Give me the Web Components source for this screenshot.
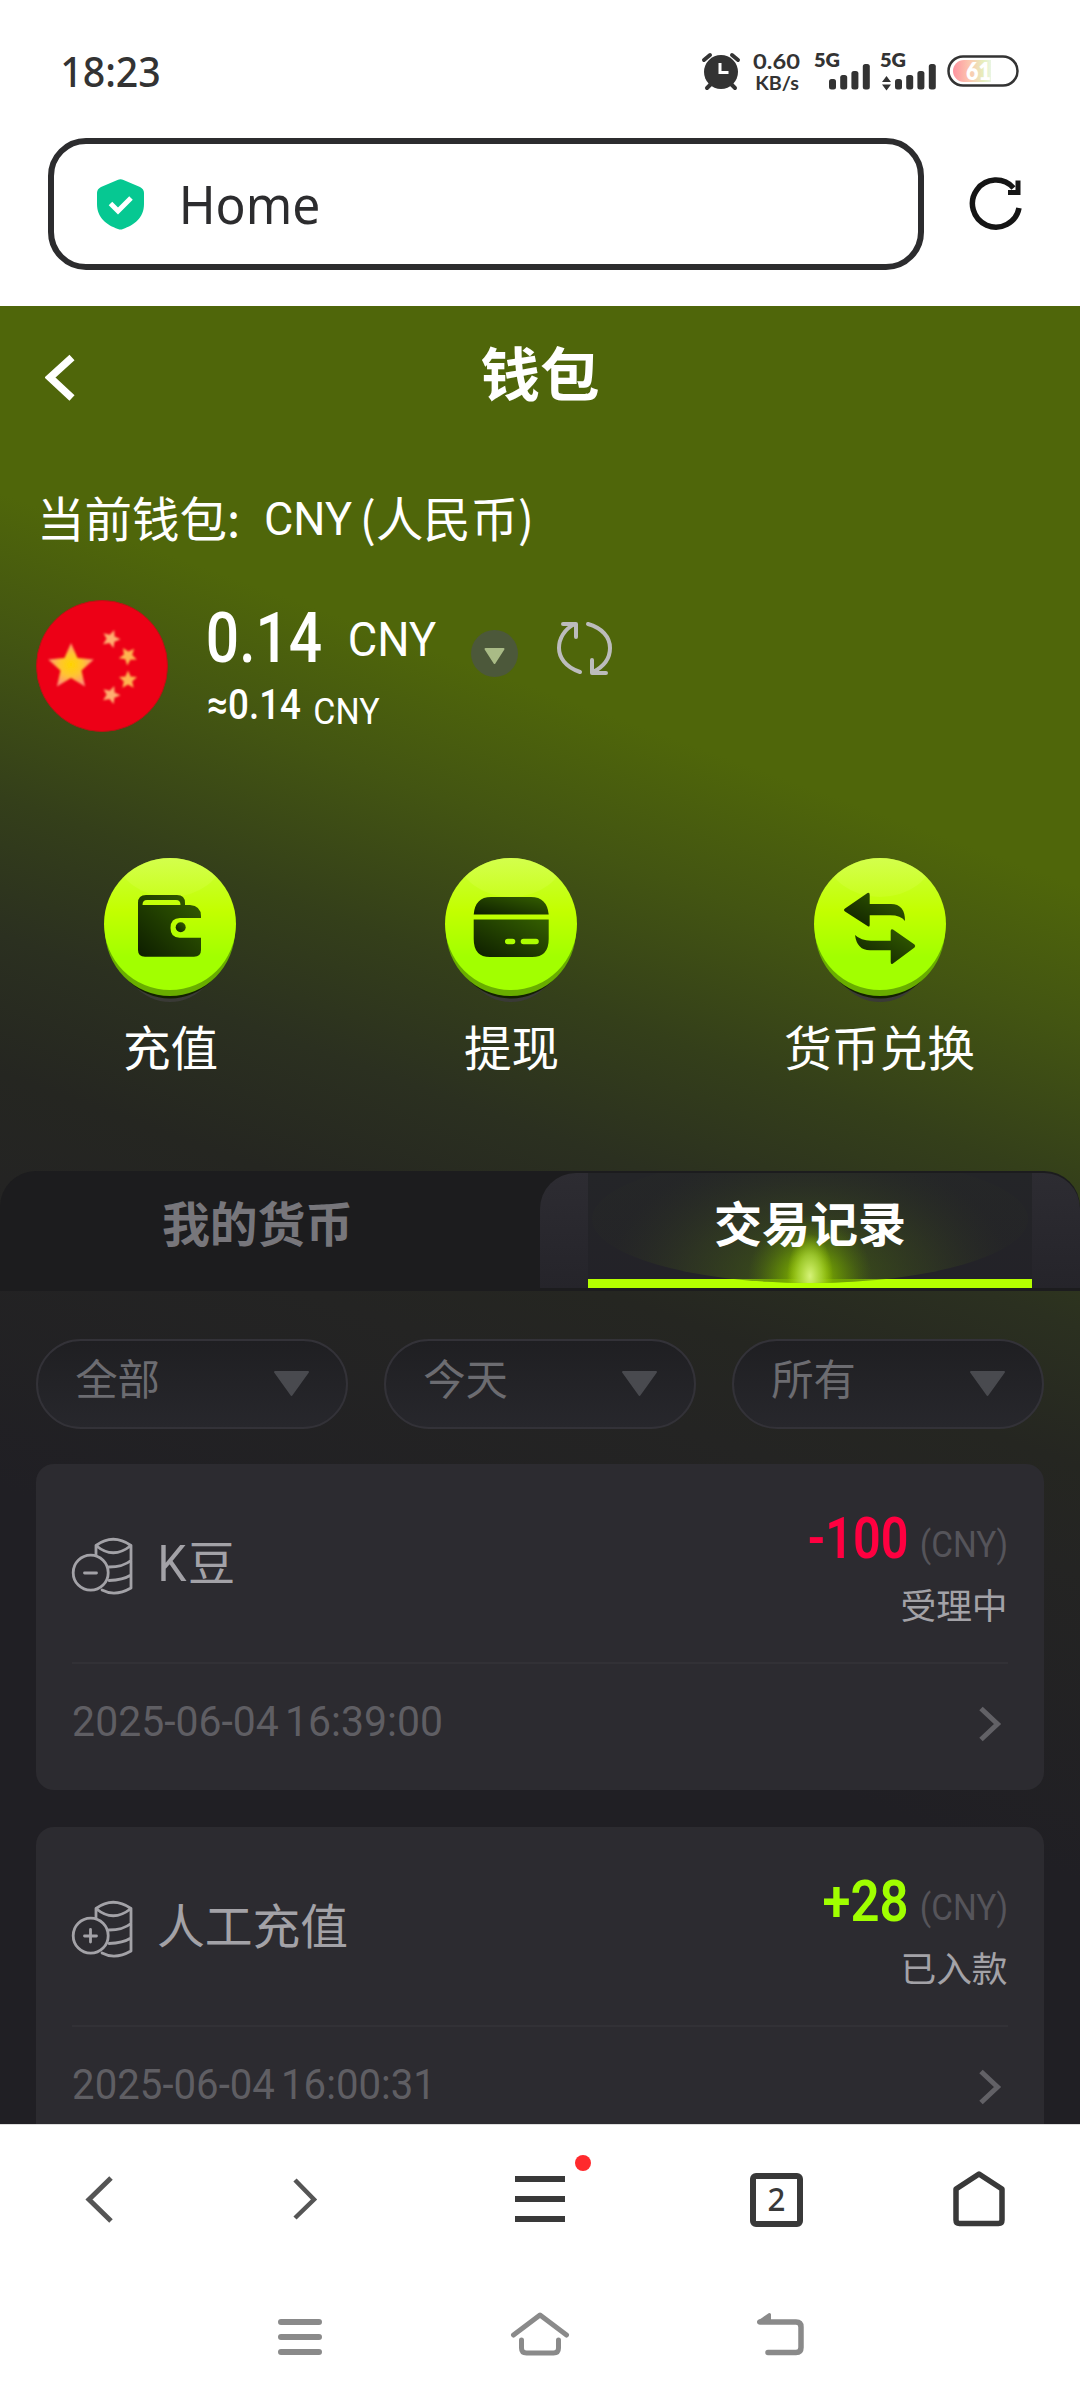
<!DOCTYPE html>
<html lang="zh-CN">
<head>
<meta charset="utf-8">
<title>钱包</title>
<style>
html,body{margin:0;padding:0;background:#fff}
body{width:1080px;height:2400px;overflow:hidden;font-family:Roboto,"Noto Sans CJK SC",sans-serif}
</style>
</head>
<body>
<phone-screen></phone-screen>
<script>
function define(name, render){
  customElements.define(name, class extends HTMLElement{
    connectedCallback(){
      if(this.shadowRoot) return;
      this.attachShadow({mode:'open'}).innerHTML = render(this);
    }
  });
}
const FONTS={din:'Roboto,"Noto Sans CJK SC",sans-serif',cjk:'"Noto Sans CJK SC",sans-serif',noto:'"Noto Sans",sans-serif',lato:'Lato,sans-serif'};

/* One run of text set to an exact ink width (w), ink height (h) and font size (s). */
define('fit-text', el=>{
  const w=+el.getAttribute('w'), h=+el.getAttribute('h'), s=+el.getAttribute('s');
  const cjk=el.hasAttribute('cjk'), pad=s*(el.hasAttribute('p')?+el.getAttribute('p'):.045);
  const base=cjk?h-s*.08:h;
  const font=FONTS[el.getAttribute('font')||(cjk?'cjk':'din')];
  return `<style>:host{display:block;flex:none;width:${w}px;height:${h}px}svg{display:block;overflow:visible}
  text{font:${el.getAttribute('wt')||400} ${s}px ${font};fill:currentColor;word-spacing:${el.getAttribute('ws')||0}px}</style>
  <svg width="${w}" height="${h}"><text x="${-pad}" y="${base}" textLength="${w+2*pad}" lengthAdjust="spacingAndGlyphs">${el.textContent}</text></svg>`;
});

define('signal-bars', el=>`<style>:host{display:block;flex:none}svg{display:block;overflow:visible}text{font:800 19px Lato,sans-serif;fill:#333}</style>
<svg width="55" height="40" fill="#333"><text x="-1" y="16" textLength="26" lengthAdjust="spacingAndGlyphs">5G</text>
${el.hasAttribute('active')?'<path d="M1 31L5.500 25L10 31ZM1 33.500L5.500 39.500L10 33.500Z"/>':''}
<rect x="14" y="28" width="7" height="10.500" rx="2.500"/><rect x="25.200" y="24" width="7" height="14.500" rx="2.500"/><rect x="36.400" y="20" width="7" height="18.500" rx="2.500"/><rect x="47.800" y="13" width="7" height="25.500" rx="2.500"/></svg>`);

define('status-bar', ()=>`<style>:host{display:flex;height:138px;box-sizing:border-box;padding:51px 61px 0 62px;color:#333;align-items:flex-start}
.t{margin-top:6px}.i{display:flex;margin-left:auto}.i>svg{display:block;overflow:visible}.n{margin:3px 16px 0 13px}.n :first-child{margin:0 0 7px}.g{width:11px}
.pct{font:800 24px Lato,sans-serif;fill:#fff}</style>
<fit-text class="t" w="97" h="29.500" s="41" wt="500" font="noto">18:23</fit-text>
<div class="i">
<svg width="38" height="40"><g stroke="#333" stroke-linecap="round" stroke-width="4" fill="none"><path d="M1 9L7 4M35 9L29 4M4 37L9 32M32 37L27 32"/></g><circle cx="18" cy="21" r="17" fill="#333"/><path d="M17 12V21.500H25.500" fill="none" stroke="#fff" stroke-width="3"/></svg>
<div class="n"><fit-text w="45" h="15" s="21" wt="700" font="lato">0.60</fit-text><fit-text w="42" h="14" s="19" wt="700" font="lato" style="margin-left:2px">KB/s</fit-text></div>
<signal-bars></signal-bars><div class="g"></div><signal-bars active></signal-bars><div class="g"></div>
<svg width="72" height="40"><defs><linearGradient id="b"><stop offset="0" stop-color="#ff93a0"/><stop offset=".45" stop-color="#fbc9b0"/><stop offset=".8" stop-color="#e6efbd"/><stop offset="1" stop-color="#e9f5e4"/></linearGradient></defs>
<rect x="1.500" y="5.500" width="69" height="29" rx="14.500" fill="#fff" stroke="#333" stroke-width="2.500"/><path d="M17 9H44V31H17A11 11 0 0 1 17 9Z" fill="url(#b)"/><text class="pct" x="19" y="28.500" textLength="25" lengthAdjust="spacingAndGlyphs">61</text></svg>
</div>`);

define('address-bar', ()=>`<style>:host{display:flex;height:168px;padding-left:48px;align-items:flex-start;color:#2c2c2e}
.box{box-sizing:border-box;width:876px;height:132px;border:6px solid #2c2c2e;border-radius:38px;display:flex;padding:35px 0 0 43px}
.box fit-text{margin:8px 0 0 37px}.r{margin:39px 0 0 46px}svg{display:block;overflow:visible;flex:none}</style>
<div class="box"><svg width="47" height="51"><path d="M20.500 1Q23.500 -.5 26.500 1L43 8Q47 10 47 14V25C47 39 37 46 26 50Q23.500 51 21 50C10 46 0 39 0 25V14Q0 10 4 8Z" fill="#06c892"/><path d="M13.500 24.500L21 32L34 19" fill="none" stroke="#fff" stroke-width="5"/></svg>
<fit-text w="137" h="37" s="52" font="noto">Home</fit-text></div>
<svg class="r" width="52" height="53"><path d="M49 31A23.500 23.500 0 1 1 43.500 11" fill="none" stroke="#151515" stroke-width="5.500"/><path d="M38 15.500H48V3.500" fill="none" stroke="#151515" stroke-width="5"/></svg>`);

define('wallet-title', ()=>`<style>:host{display:flex;color:#fff;height:191px;padding-left:45px;align-items:flex-start}svg{display:block;margin-top:48px;flex:none}fit-text{margin:41px 0 0 407px}</style>
<svg width="31" height="48"><path d="M27 3.500L5 23.500L27 44" fill="none" stroke="#fff" stroke-width="7.500"/></svg>
<fit-text w="114" h="54" s="58" wt="700" cjk>钱包</fit-text>`);

const star=(cx,cy,r,c,rot=0)=>{let p='';for(let i=0;i<10;i++){const a=(-90+rot+i*36)*Math.PI/180,q=i%2?r*.46:r;p+=(cx+q*Math.cos(a)).toFixed(1)+','+(cy+q*Math.sin(a)).toFixed(1)+' ';}return `<polygon points="${p}" fill="${c}"/>`;};

define('wallet-balance', ()=>`<style>:host{display:block;color:#fff;height:361px}
.l{display:flex;padding-left:39px;height:103px;align-items:flex-start}
.r{display:flex;padding-left:36px;align-items:flex-start}svg{display:block;overflow:visible;flex:none}
.a{margin-left:41px;width:227px}.a div{display:flex;align-items:flex-start}</style>
<div class="l"><fit-text w="199" h="44" s="47.500" cjk>当前钱包:</fit-text><fit-text style="margin:5px 0 0 28px" w="84" h="33" s="46">CNY</fit-text><fit-text style="margin-left:12px" w="170" h="44" s="47.500" cjk>(人民币)</fit-text></div>
<div class="r"><svg width="132" height="132"><defs><radialGradient id="s"><stop offset="0" stop-color="#ffd400"/><stop offset=".5" stop-color="#ffc531"/><stop offset="1" stop-color="#ff9477"/></radialGradient><filter id="f"><feGaussianBlur stdDeviation=".9"/></filter></defs><circle cx="66" cy="66" r="65.500" fill="#ed0016" stroke="#b91313"/>
<g filter="url(#f)">${star(35,67,24,'url(#s)')}${star(75,39,9.5,'#ffae70',20)}${star(92,56,9.5,'#ffb450',40)}${star(92,80,9.5,'#ffb450')}${star(75,95,9.5,'#ffae70',20)}</g></svg>
<div class="a"><div><fit-text style="margin-top:11px" w="110" h="51" s="71" wt="500">0.14</fit-text><fit-text style="margin:21px 0 0 31px" w="84" h="34.500" s="49">CNY</fit-text></div>
<div><fit-text style="margin-top:27px" w="90" h="30" s="42" wt="500">≈0.14</fit-text><fit-text style="margin:36px 0 0 16px" w="63" h="26" s="36.500">CNY</fit-text></div></div>
<svg style="margin:30px 0 0 35px" width="47" height="47"><circle cx="23.500" cy="23.500" r="23.500" fill="#4c583a"/><path d="M14.500 19H32.500L23.500 33Z" fill="#a9bb86" stroke="#a9bb86" stroke-width="2" stroke-linejoin="round"/></svg>
<svg style="margin:21px 0 0 39px" width="56" height="54" fill="none" stroke="#bcbcbc" stroke-width="4" stroke-linecap="round" stroke-linejoin="round"><path d="M23 51C8 46 2 36 2 27C2 18 7 8 18 3M6 3H19V16"/><path d="M31 3C45 7 53 16 53 27C53 36 48 45 36 51M49 52H35V39"/></svg></div>`);

const icons={
wallet:'<path fill-rule="evenodd" d="M34 45Q34 37 42 37H73Q81 37 81 45V47H86Q97 48 97 58V60H76Q66.500 60 66.500 70T76 79.700H97V92Q97 98.700 90 98.700H41Q34 98.700 34 92ZM38.500 47H76.500Q76.500 42 72 42H43Q38.500 42 38.500 47Z"/><circle cx="76.700" cy="69.300" r="5"/>',
card:'<path d="M28.700 56.500Q30 39 46 39H86Q102 39 103.700 56.500Z"/><path fill-rule="evenodd" d="M28.700 61.500H103.700V81Q103.700 99 87 99H45Q28.700 99 28.700 81ZM62.800 80.700A2.800 2.800 0 0 0 62.800 86.300H67.500A2.800 2.800 0 0 0 67.500 80.700ZM78.500 80.700A2.800 2.800 0 0 0 78.500 86.300H91A2.800 2.800 0 0 0 91 80.700Z"/>',
swap:'<path d="M31 50.500L53.500 35Q55.700 34 55.700 37V46H77Q91 46 91 63Q87 57.300 76 57.300H55.700V67Q55.700 69.500 53.500 68L31 53.500Q29 52 31 50.500Z"/><path d="M100.500 86.500L79 71.500Q76.700 70.500 76.700 73V82.700H57Q47 82.700 41 77Q43 92.300 56 92.300H76.700V104Q76.700 107 79 105.500L100.500 89.500Q102 88 100.500 86.500Z"/>'};
define('action-button', el=>`<style>:host{display:flex;flex-direction:column;align-items:center;flex:none;color:#fff}svg{display:block;overflow:visible}fit-text{margin-top:24px}</style>
<svg width="132" height="144"><defs><linearGradient id="g" x2="0" y2="1"><stop offset="0" stop-color="#ccff3c"/><stop offset=".4" stop-color="#c3ff00"/><stop offset=".75" stop-color="#a2ff00"/></linearGradient><linearGradient id="i" x1="1" y1="0" x2="0" y2="1"><stop offset="0" stop-color="#356000"/><stop offset="1" stop-color="#0d1d00"/></linearGradient><linearGradient id="h" x2="0" y2="1"><stop offset="0" stop-color="#dcff70" stop-opacity=".8"/><stop offset="1" stop-color="#d8ff45" stop-opacity=".25"/></linearGradient><clipPath id="c"><circle cx="66" cy="66" r="66"/></clipPath></defs>
<ellipse cx="66" cy="84" rx="52" ry="60" fill="#3a3a36"/><ellipse cx="66" cy="79" rx="59" ry="61.500" fill="#122000"/><ellipse cx="66" cy="72" rx="65" ry="66" fill="#69ae00"/><circle cx="66" cy="66" r="66" fill="url(#g)"/><ellipse cx="66" cy="0" rx="52" ry="39" fill="url(#h)" clip-path="url(#c)"/>
<g fill="url(#i)">${icons[el.getAttribute('icon')]}</g></svg>
<fit-text w="${el.getAttribute('w')}" h="44" s="47.500" cjk>${el.textContent}</fit-text>`);

define('action-row', ()=>`<style>:host{display:flex;box-sizing:border-box;height:313px;padding-left:104px;gap:209px}</style>
<action-button icon="wallet" w="91">充值</action-button><action-button icon="card" w="91">提现</action-button><action-button icon="swap" w="187">货币兑换</action-button>`);

define('tab-strip', ()=>`<style>:host{display:flex;box-sizing:border-box;height:120px;padding-top:2px;background:#1c1c1e;border-radius:36px 36px 0 0;overflow:hidden}
.o{width:540px;color:#77767b}.o fit-text{margin:29px 0 0 164px}
.s{width:540px;height:115px;background:linear-gradient(#2d2c32,#25242a);border-radius:36px 36px 0 0;color:#fff;overflow:hidden;display:flex;justify-content:center}
.p{width:444px;height:115px;position:relative;background:linear-gradient(#242528,#232228)}
.p svg{position:absolute;left:0;top:0}.p fit-text{position:relative;margin:29px 0 0 128px}.p i{position:absolute;left:0;bottom:0;width:444px;height:9px;background:#b5ff00}</style>
<div class="o"><fit-text w="187" h="44" s="47.500" wt="700" cjk>我的货币</fit-text></div>
<div class="s"><div class="p"><i></i>
<svg width="444" height="115"><defs><radialGradient id="a" gradientUnits="userSpaceOnUse" cx="222" cy="108" r="205" gradientTransform="translate(0 38) scale(1 .65)"><stop offset="0" stop-color="#5a8400" stop-opacity=".85"/><stop offset=".25" stop-color="#496611" stop-opacity=".55"/><stop offset=".6" stop-color="#405319" stop-opacity=".35"/><stop offset="1" stop-color="#303820" stop-opacity=".08"/></radialGradient><radialGradient id="d"><stop offset="0" stop-color="#a5d700" stop-opacity=".95"/><stop offset=".45" stop-color="#7aae00" stop-opacity=".55"/><stop offset="1" stop-color="#5b8600" stop-opacity="0"/></radialGradient><radialGradient id="e"><stop offset="0" stop-color="#d6f27a"/><stop offset=".5" stop-color="#b0db3f" stop-opacity=".7"/><stop offset="1" stop-color="#a5d700" stop-opacity="0"/></radialGradient><clipPath id="c"><ellipse cx="222" cy="46" rx="218" ry="64"/></clipPath></defs>
<g clip-path="url(#c)"><rect width="444" height="115" fill="url(#a)"/><ellipse cx="222" cy="104" rx="62" ry="62" fill="url(#d)"/><ellipse cx="222" cy="103" rx="23" ry="42" fill="url(#e)"/></g></svg>
<fit-text w="188" h="44" s="47.500" wt="700" cjk>交易记录</fit-text></div></div>`);

define('filter-pill', el=>`<style>:host{box-sizing:border-box;display:flex;width:312px;height:90px;border:2px solid #333238;border-radius:45px;background:linear-gradient(#1f1f22,#27272c);color:#6c6c71;padding:19px 36px 0 39px;justify-content:space-between;align-items:flex-start}svg{display:block;margin-top:11px}</style>
<fit-text w="81" h="38.500" s="41.500" cjk>${el.textContent}</fit-text><svg width="37" height="26"><path d="M2 1H35L18.500 24Z" fill="#494a4f" stroke="#494a4f" stroke-width="2" stroke-linejoin="round"/></svg>`);
define('filter-row', ()=>`<style>:host{display:flex;height:173px;box-sizing:border-box;padding:48px 36px 0;justify-content:space-between;align-items:flex-start}</style>
<filter-pill>全部</filter-pill><filter-pill>今天</filter-pill><filter-pill>所有</filter-pill>`);

define('record-card', el=>`<style>:host{box-sizing:border-box;display:block;flex:none;width:1008px;height:326px;border-radius:18px;background:#2c2b30;padding:0 36px;color:#a3a2a7}
svg{display:block;overflow:visible;flex:none}.t{height:198px;border-bottom:2px solid #323136;display:flex;align-items:flex-start}
.t>svg{margin-top:74px}.n{display:flex;align-items:flex-start;margin:77px 0 0 27px;gap:5px}.v{margin-left:auto;padding:53px 2px 0 0;display:flex;flex-direction:column;align-items:flex-end}
.v div{display:flex;gap:16px;align-items:flex-start;height:72px}.b{display:flex;align-items:flex-start;color:#5f5e63;justify-content:space-between;padding:42px 6px 0 2px}</style>
<div class="t"><svg width="60" height="57" fill="none" stroke="#a3a2a7" stroke-width="2.800" stroke-linejoin="round" stroke-linecap="round"><path d="M24 17V7.500Q41 -5 59 7.500V50Q43 59 30 52M24 7.500Q41 22 59 7.500M37 29Q51 29 59 22.500M37 42.500Q51 42 59 37"/><circle cx="18.700" cy="34.700" r="17.500"/><path d="M12.500 35H24.500${el.hasAttribute('plus')?'M18.500 28.500V41':''}"/></svg>
<div class="n"><slot name="name"></slot></div>
<div class="v"><div><slot name="amount"></slot><fit-text style="margin-top:14px;color:#55545a" w="84" h="25.500" s="36" p=".06">(CNY)</fit-text></div><slot name="state"></slot></div></div>
<div class="b"><slot name="time"></slot><svg width="24" height="36"><path d="M3 2.500L19.500 18L3 33.500" fill="none" stroke="#626166" stroke-width="5"/></svg></div>`);
define('record-list', ()=>`<style>:host{display:flex;flex-direction:column;gap:37px;padding:0 36px}</style>
<record-card><fit-text slot="name" style="margin-top:4px" w="26" h="36" s="50" p=".03">K</fit-text><fit-text slot="name" w="43" h="43" s="46.500" cjk>豆</fit-text>
<fit-text slot="amount" style="color:#ff0040" w="96" h="41" s="57" wt="600">-100</fit-text><fit-text slot="state" w="104" h="33" s="35.500" cjk>受理中</fit-text><fit-text slot="time" w="367" h="30" s="42" ws="-4">2025-06-04 16:39:00</fit-text></record-card>
<record-card plus><fit-text slot="name" w="187" h="44" s="47.500" cjk>人工充值</fit-text>
<fit-text slot="amount" style="color:#a0ff00" w="81" h="41" s="57" wt="600">+28</fit-text><fit-text slot="state" w="104" h="33" s="35.500" cjk>已入款</fit-text><fit-text slot="time" w="360" h="30" s="42" ws="-4">2025-06-04 16:00:31</fit-text></record-card>`);

define('wallet-page', ()=>`<style>:host{display:block;height:1818px;overflow:hidden;background:linear-gradient(200deg,#4f660a 0,#4f660a 545px,#435512 680px,#343f1a 830px,#2b3020 960px,#252621 1090px,#242423 1190px,#201f24 1480px)}</style>
<wallet-title></wallet-title><wallet-balance></wallet-balance><action-row></action-row><tab-strip></tab-strip><filter-row></filter-row><record-list></record-list>`);

define('browser-nav', ()=>`<style>:host{box-sizing:border-box;display:flex;height:160px;border-top:1px solid #ddd;padding:45px 74px 0 85px;align-items:flex-start;color:#393939}svg{display:block;overflow:visible;flex:none}
.m{position:relative;margin-left:196px}.m b{position:absolute;left:60px;top:-15px;width:16px;height:16px;border-radius:50%;background:#ff2a2d}
.w{box-sizing:border-box;width:53px;height:54px;border:6px solid #393939;border-radius:6px;margin:3px 0 0 185px;display:flex;padding:9px 0 0 13px}</style>
<svg style="margin-top:6px" width="28" height="48"><path d="M26 2L4 23.500L26 45" fill="none" stroke="#555" stroke-width="5"/></svg>
<svg style="margin:8px 0 0 180px" width="26" height="42"><path d="M2 2L21 21.500L2 40" fill="none" stroke="#555" stroke-width="4.500"/></svg>
<div class="m"><svg width="50" height="54"><path d="M0 9H50M0 29H50M0 49H50" stroke="#393939" stroke-width="6"/></svg><b></b></div>
<div class="w"><fit-text w="15" h="23" s="32" wt="500" font="noto">2</fit-text></div>
<svg style="margin-left:149px" width="54" height="57"><path d="M4 19L27 4L50 19V50Q50 53.500 46.500 53.500H7.500Q4 53.500 4 50Z" fill="none" stroke="#393939" stroke-width="5.500" stroke-linejoin="round"/></svg>`);

define('system-nav', ()=>`<style>:host{display:flex;height:88px;padding:28px 276px 0 278px;align-items:flex-start;justify-content:space-between}svg{display:block;overflow:visible}</style>
<svg width="44" height="44" stroke="#8a8a8a" stroke-width="6" stroke-linecap="round"><path d="M3 10H41M3 25H41M3 40H41"/></svg>
<svg width="58" height="44" fill="none" stroke="#8a8a8a" stroke-width="5" stroke-linecap="round" stroke-linejoin="round"><path d="M3.500 23L30 3L56.500 23M11.500 28V36Q11.500 41 16.500 41H43.500Q48.500 41 48.500 36V28"/></svg>
<svg width="48" height="44" fill="none" stroke="#8a8a8a" stroke-width="5.500" stroke-linecap="round" stroke-linejoin="round"><path d="M4 10H40Q45 10 45 15V35.500Q45 40.500 40 40.500H12"/><path d="M2.500 10L13.500 2.500V10Z" fill="#8a8a8a" stroke-width="3"/></svg>`);

define('phone-screen', ()=>`<style>:host{display:block;width:1080px;height:2400px;background:#fff;overflow:hidden}</style>
<status-bar></status-bar><address-bar></address-bar><wallet-page></wallet-page><browser-nav></browser-nav><system-nav></system-nav>`);
</script>
</body>
</html>
